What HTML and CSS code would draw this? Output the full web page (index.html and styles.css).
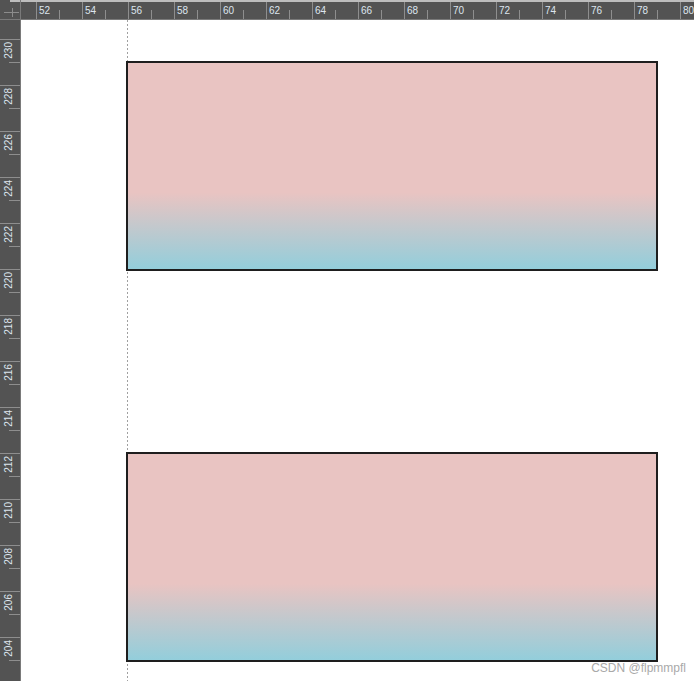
FILE: index.html
```html
<!DOCTYPE html>
<html lang="en">
<head>
  <meta charset="UTF-8" />
  <title>Canvas</title>
  <link rel="stylesheet" href="styles.css">
</head>
<body>
  <div class="workspace">
    <div class="corner">
      <svg width="20" height="20" viewBox="0 0 20 20">
        <path d="M4 12.5H19M12.5 8V17" stroke="#8c8c8c" stroke-width="1" fill="none" />
      </svg>
    </div>

    <div class="ruler-top">
      <div class="tick-h"><span>52</span></div>
      <div class="tick-h"><span>54</span></div>
      <div class="tick-h"><span>56</span></div>
      <div class="tick-h"><span>58</span></div>
      <div class="tick-h"><span>60</span></div>
      <div class="tick-h"><span>62</span></div>
      <div class="tick-h"><span>64</span></div>
      <div class="tick-h"><span>66</span></div>
      <div class="tick-h"><span>68</span></div>
      <div class="tick-h"><span>70</span></div>
      <div class="tick-h"><span>72</span></div>
      <div class="tick-h"><span>74</span></div>
      <div class="tick-h"><span>76</span></div>
      <div class="tick-h"><span>78</span></div>
      <div class="tick-h"><span>80</span></div>
    </div>

    <div class="ruler-left">
      <div class="tick-v"><span>230</span></div>
      <div class="tick-v"><span>228</span></div>
      <div class="tick-v"><span>226</span></div>
      <div class="tick-v"><span>224</span></div>
      <div class="tick-v"><span>222</span></div>
      <div class="tick-v"><span>220</span></div>
      <div class="tick-v"><span>218</span></div>
      <div class="tick-v"><span>216</span></div>
      <div class="tick-v"><span>214</span></div>
      <div class="tick-v"><span>212</span></div>
      <div class="tick-v"><span>210</span></div>
      <div class="tick-v"><span>208</span></div>
      <div class="tick-v"><span>206</span></div>
      <div class="tick-v"><span>204</span></div>
    </div>

    <main class="canvas">
      <div class="guide"></div>
      <div class="swatch"></div>
      <div class="swatch"></div>
      <div class="watermark">CSDN @flpmmpfl</div>
    </main>
  </div>
</body>
</html>
```

FILE: styles.css
```css
:root {
  --ruler-bg: #535353;
  --ruler-edge: #7a7a7a;
  --tick: #8e8e8e;
  --label: #dde5ee;
  --pink: #e9c4c2;
  --blue: #93cedb;
}

* {
  box-sizing: border-box;
}

body {
  margin: 0;
  width: 694px;
  height: 681px;
  overflow: hidden;
  font-family: "Liberation Sans", Arial, sans-serif;
  background: #ffffff;
}

.workspace {
  display: grid;
  grid-template-columns: 21px 673px;
  grid-template-rows: 20px 661px;
  height: 681px;
  overflow: hidden;
}

/* Ruler corner */
.corner {
  background:
    linear-gradient(#bdbdbd, #bdbdbd) no-repeat 10px 0 / 11px 2px,
    var(--ruler-bg);
  border-bottom: 1px solid var(--ruler-edge);
  border-right: 1px solid var(--ruler-edge);
}

.corner svg {
  display: block;
}

/* Horizontal ruler */
.ruler-top {
  display: flex;
  overflow: hidden;
  min-width: 0;
  padding-left: 15px;
  background: var(--ruler-bg);
  border-top: 2px solid #bdbdbd;
  border-bottom: 1px solid var(--ruler-edge);
}

.tick-h {
  flex: 0 0 46px;
  border-left: 1px solid var(--tick);
  background: linear-gradient(var(--tick), var(--tick)) no-repeat 22px 100% / 1px 9px;
  padding: 3px 0 0 2px;
}

.tick-h span {
  display: block;
  font-size: 10px;
  line-height: 12px;
  color: var(--label);
}

/* Vertical ruler */
.ruler-left {
  display: flex;
  flex-direction: column;
  overflow: hidden;
  min-height: 0;
  padding-top: 19px;
  background: var(--ruler-bg);
  border-right: 1px solid var(--ruler-edge);
}

.tick-v {
  flex: 0 0 46px;
  border-top: 1px solid var(--tick);
  background: linear-gradient(var(--tick), var(--tick)) no-repeat 100% 22px / 11px 1px;
  padding: 2px 0 0 4px;
}

.tick-v span {
  display: block;
  writing-mode: vertical-rl;
  transform: rotate(180deg);
  font-size: 10px;
  line-height: 10px;
  color: var(--label);
}

/* Document area */
.canvas {
  position: relative;
  display: flex;
  flex-direction: column;
  gap: 181px;
  min-height: 0;
  overflow: hidden;
  padding: 41px 0 0 105px;
  background: #ffffff;
}

.guide {
  position: absolute;
  left: 106px;
  top: 0;
  bottom: 0;
  width: 1px;
  background: repeating-linear-gradient(to bottom, #a0a0a0 0 2px, transparent 2px 4px);
}

.swatch {
  position: relative;
  flex: 0 0 210px;
  width: 532px;
  border: 2px solid #1e1e1e;
  background: linear-gradient(to bottom, var(--pink) 0%, var(--pink) 63%, var(--blue) 100%);
}

.watermark {
  position: absolute;
  right: 8px;
  bottom: 6px;
  font-size: 12px;
  color: #a9a9a9;
}
```
